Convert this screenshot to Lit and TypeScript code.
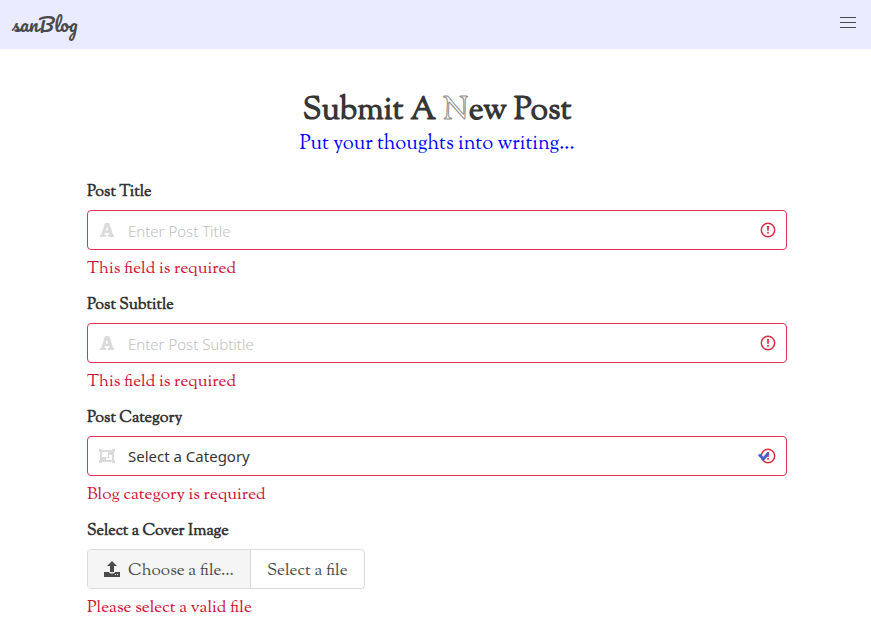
import { LitElement, html, css, svg, nothing } from "lit";
import { customElement } from "lit/decorators.js";

const fontIcon = svg`<path fill-rule="evenodd" d="M0 14v-2h1.2L5 0h4.200l4 12H14v2H8v-2h1.500l-.6-2H5l-.6 2H6v2zM5.700 7.600h2.500L7 3.400z"/>`;
const groupIcon = svg`<path fill-rule="evenodd" d="M0 0h3v1h10V0h3v3h-1v8h1v3h-3v-1H3v1H0v-3h1V3H0zM3 3v5h6V3zM10 6v3H7v2h6V6z"/>`;
const uploadIcon = svg`<path fill-rule="evenodd" d="M8 0l5 5h-3v6H6V5H3zM0 11h5c0 2 6 2 6 0h5v5H0zM11 13v1h1v-1zM13 13v1h1v-1z"/>`;

@customElement("app-root")
export class AppRoot extends LitElement {
  static styles = css`
    :host {
      display: block;
      font-family: "Sorts Mill Goudy", "Goudy Bookletter 1911", "Liberation Serif", serif;
      font-size: 17px;
      line-height: 24px;
      color: #4a4a4a;
    }
    * { box-sizing: border-box; }
    header {
      display: flex;
      align-items: center;
      justify-content: space-between;
      height: 49px;
      padding: 0 12px 2px;
      background: #ebebff;
    }
    .brand {
      font-family: Pacifico, "Liberation Serif", cursive;
      font-size: 19px;
      color: #4a4a4a;
      text-decoration: none;
    }
    .burger {
      display: flex;
      flex-direction: column;
      gap: 4px;
      width: 22px;
      padding: 0 3px 2px;
      border: 0;
      background: none;
    }
    .burger span { height: 1px; background: #4a4a4a; }
    main { padding: 41px 84px 0 87px; }
    h1 {
      margin: 0;
      font-size: 32px;
      line-height: 42px;
      text-align: center;
      color: #363636;
    }
    .outlined {
      font-weight: normal;
      color: #ffffff;
      -webkit-text-stroke: 1px #8c8c8c;
    }
    .tagline {
      margin: 0 0 21px;
      font-size: 20px;
      line-height: 26px;
      text-align: center;
      color: #0000ff;
    }
    .field { margin-bottom: 10px; }
    .label {
      display: block;
      margin-bottom: 4px;
      font-size: 16px;
      line-height: 27px;
      font-weight: bold;
      color: #363636;
    }
    .control { display: grid; align-items: center; }
    .control > * { grid-area: 1 / 1; }
    .box {
      width: 100%;
      height: 40px;
      padding: 0 40px;
      border: 1px solid #de3352;
      border-radius: 4px;
      background: #ffffff;
      font-family: "Noto Sans", sans-serif;
      font-size: 15px;
      color: #363636;
      appearance: none;
    }
    input.box { padding-top: 2px; }
    .box::placeholder { color: #c0c0c0; opacity: 1; font-weight: 300; }
    .icon { fill: #dbdbdb; pointer-events: none; z-index: 1; }
    .left { justify-self: start; width: 40px; display: flex; justify-content: center; }
    .right { justify-self: end; margin-right: 11px; }
    .error { margin: 6px 0 0; line-height: 26px; color: #cc0f35; }
    .file {
      display: inline-flex;
      position: relative;
      height: 40px;
      border: 1px solid #dbdbdb;
      border-radius: 4px;
      overflow: hidden;
      vertical-align: top;
    }
    .file input { position: absolute; inset: 0; width: 100%; opacity: 0; }
    .cta {
      display: flex;
      align-items: center;
      gap: 8px;
      padding: 0 16px;
      background: #f5f5f5;
      border-right: 1px solid #dbdbdb;
    }
    .cta svg { fill: #4a4a4a; }
    .name { display: flex; align-items: center; padding: 0 16px; }
    .file-text { padding-top: 4px; }
  `;

  private warning(withTick = false) {
    return html`<svg class="icon right" width="18" height="16" viewBox="0 0 18 16" aria-hidden="true">
      <circle cx="10" cy="8" r="6.700" fill="none" stroke="#d93046" stroke-width="1.500" />
      <path d="M9 4h2l-.3 5H9.300zM9.200 10h1.600v1.700H9.200z" fill="#d93046" />
      ${withTick ? svg`<path d="M1 6.500l4.500 4.500 5-6" fill="none" stroke="#485fc7" stroke-width="2.800" />` : nothing}
    </svg>`;
  }

  private textField(id: string, label: string) {
    return html`<div class="field">
      <label class="label" for=${id}>${label}</label>
      <div class="control">
        <input class="box" id=${id} type="text" placeholder="Enter ${label}" />
        <span class="icon left"><svg width="14" height="14" viewBox="0 0 14 14" aria-hidden="true">${fontIcon}</svg></span>
        ${this.warning()}
      </div>
      <p class="error">This field is required</p>
    </div>`;
  }

  render() {
    return html`
      <header>
        <a class="brand" href="#">sanBlog</a>
        <button class="burger" type="button" aria-label="Menu"><span></span><span></span><span></span></button>
      </header>
      <main>
        <h1>Submit A <span class="outlined">N</span>ew Post</h1>
        <p class="tagline">Put your thoughts into writing...</p>
        <form>
          ${this.textField("title", "Post Title")}
          ${this.textField("subtitle", "Post Subtitle")}
          <div class="field">
            <label class="label" for="category">Post Category</label>
            <div class="control">
              <select class="box" id="category"><option>Select a Category</option></select>
              <span class="icon left"><svg width="16" height="14" viewBox="0 0 16 14" aria-hidden="true">${groupIcon}</svg></span>
              ${this.warning(true)}
            </div>
            <p class="error">Blog category is required</p>
          </div>
          <div class="field">
            <label class="label" for="cover">Select a Cover Image</label>
            <div class="file">
              <span class="cta"><svg width="16" height="16" viewBox="0 0 16 16" aria-hidden="true">${uploadIcon}</svg><span class="file-text">Choose a file…</span></span>
              <span class="name"><span class="file-text">Select a file</span></span>
              <input id="cover" type="file" />
            </div>
            <p class="error">Please select a valid file</p>
          </div>
        </form>
      </main>
    `;
  }
}
